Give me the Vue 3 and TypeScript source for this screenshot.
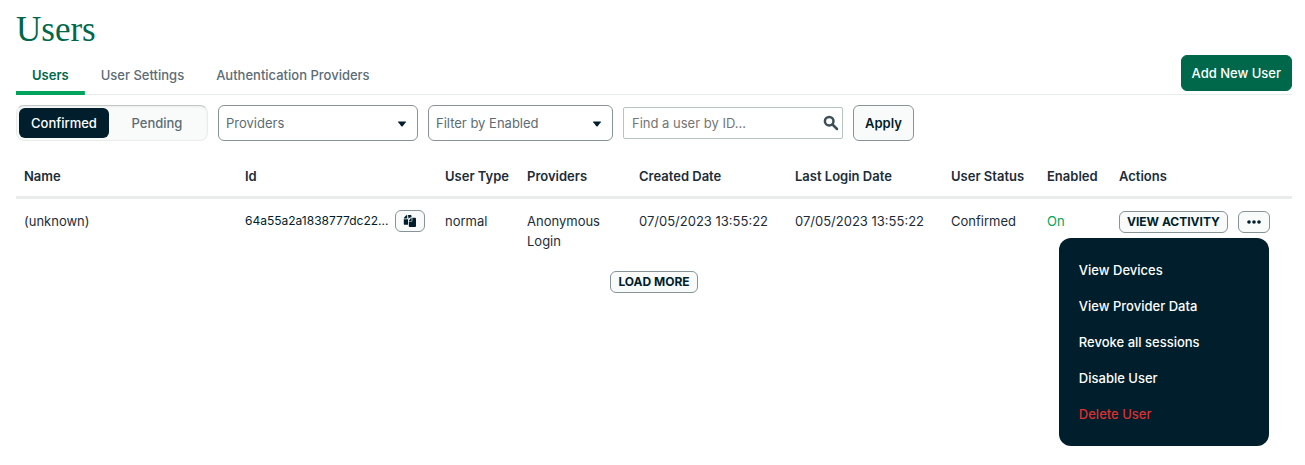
<script setup lang="ts">
import { ref } from 'vue'

interface User {
  name: string
  id: string
  type: string
  provider: string
  created: string
  lastLogin: string
  status: string
  enabled: boolean
}

const tabs = ['Users', 'User Settings', 'Authentication Providers']
const activeTab = ref('Users')

const segments = ['Confirmed', 'Pending']
const segment = ref('Confirmed')

const provider = ref('')
const enabledFilter = ref('')
const search = ref('')
const menuOpen = ref(true)

const columns = [
  { label: 'Name', key: 'name' },
  { label: 'Id', key: 'id' },
  { label: 'User Type', key: 'type' },
  { label: 'Providers', key: 'provider' },
  { label: 'Created Date', key: 'date' },
  { label: 'Last Login Date', key: 'date' },
  { label: 'User Status', key: 'status' },
  { label: 'Enabled', key: 'enabled' },
  { label: 'Actions', key: 'actions' },
]

const users: User[] = [
  {
    name: '(unknown)',
    id: '64a55a2a1838777dc22...',
    type: 'normal',
    provider: 'Anonymous Login',
    created: '07/05/2023 13:55:22',
    lastLogin: '07/05/2023 13:55:22',
    status: 'Confirmed',
    enabled: true,
  },
]

const menuItems = [
  { label: 'View Devices', danger: false },
  { label: 'View Provider Data', danger: false },
  { label: 'Revoke all sessions', danger: false },
  { label: 'Disable User', danger: false },
  { label: 'Delete User', danger: true },
]
</script>

<template>
  <main class="page">
    <h1 class="title">Users</h1>

    <div class="tab-bar">
      <div class="tabs" role="tablist">
        <button
          v-for="tab in tabs"
          :key="tab"
          type="button"
          role="tab"
          class="tab"
          :class="{ active: tab === activeTab }"
          :aria-selected="tab === activeTab"
          @click="activeTab = tab"
        >
          {{ tab }}
        </button>
      </div>
      <button type="button" class="primary">Add New User</button>
    </div>

    <form class="filters" @submit.prevent>
      <div class="segmented" role="group" aria-label="User state">
        <button
          v-for="item in segments"
          :key="item"
          type="button"
          class="segment"
          :class="{ active: item === segment }"
          :aria-pressed="item === segment"
          @click="segment = item"
        >
          {{ item }}
        </button>
      </div>

      <div class="select-box providers">
        <select v-model="provider" aria-label="Providers">
          <option value="">Providers</option>
          <option value="anon">Anonymous Login</option>
        </select>
        <svg class="caret" viewBox="0 0 10 6" aria-hidden="true"><path d="M1.500.5h7q.9 0 .3.8L5.600 5.300q-.6.6-1.200 0L1.200 1.300Q.6.500 1.500.5z" /></svg>
      </div>

      <div class="select-box enabled-filter">
        <select v-model="enabledFilter" aria-label="Filter by Enabled">
          <option value="">Filter by Enabled</option>
          <option value="on">On</option>
          <option value="off">Off</option>
        </select>
        <svg class="caret" viewBox="0 0 10 6" aria-hidden="true"><path d="M1.500.5h7q.9 0 .3.8L5.600 5.300q-.6.6-1.200 0L1.200 1.300Q.6.500 1.500.5z" /></svg>
      </div>

      <div class="search">
        <input v-model="search" type="text" placeholder="Find a user by ID..." aria-label="Find a user by ID" />
        <svg class="search-icon" viewBox="0 0 16 16" aria-hidden="true">
          <circle cx="6.200" cy="6.200" r="4.300" />
          <path d="M9.500 9.500l4.500 4.500" />
        </svg>
      </div>

      <button type="submit" class="apply">Apply</button>
    </form>

    <table class="users">
      <colgroup>
        <col v-for="column in columns" :key="column.label" :class="`col-${column.key}`" />
      </colgroup>
      <thead>
        <tr>
          <th v-for="column in columns" :key="column.label" scope="col">{{ column.label }}</th>
        </tr>
      </thead>
      <tbody>
        <tr v-for="user in users" :key="user.id">
          <td>{{ user.name }}</td>
          <td>
            <div class="id-cell">
              <span class="id-text">{{ user.id }}</span>
              <button type="button" class="small copy" aria-label="Copy id">
                <svg viewBox="0 0 14 14" aria-hidden="true">
                  <path class="solid" d="M4.200 1v3.600H.8q0-.6.4-1L3 1.600Q3.500 1 4.200 1z" />
                  <path class="solid" d="M5 1h2.600q.9 0 .9.900v1.300Q7 3.200 6.200 4L5.500 4.800z" />
                  <path class="solid" d="M.8 5.300h4.400q-.2.400-.2.900v4.600H1.700q-.9 0-.9-.9z" />
                  <path class="solid" d="M9.300 3.800h2.800q.9 0 .9.900v7.400q0 .9-.9.900H6.700q-.9 0-.9-.9V7.600h2.600q.9 0 .9-.9z" />
                  <path class="solid" d="M8.600 4v2.900H5.900q0-.5.4-1l1.300-1.400q.4-.4 1-.5z" />
                </svg>
              </button>
            </div>
          </td>
          <td>{{ user.type }}</td>
          <td>{{ user.provider }}</td>
          <td>{{ user.created }}</td>
          <td>{{ user.lastLogin }}</td>
          <td>{{ user.status }}</td>
          <td class="on">{{ user.enabled ? 'On' : 'Off' }}</td>
          <td>
            <div class="actions">
              <button type="button" class="small">VIEW ACTIVITY</button>
              <div class="menu-anchor">
                <button
                  type="button"
                  class="small more"
                  aria-label="More actions"
                  aria-haspopup="menu"
                  :aria-expanded="menuOpen"
                  @click="menuOpen = !menuOpen"
                >
                  <svg viewBox="0 0 14 4" aria-hidden="true">
                    <circle cx="2" cy="2" r="1.800" />
                    <circle cx="7" cy="2" r="1.800" />
                    <circle cx="12" cy="2" r="1.800" />
                  </svg>
                </button>
                <div v-if="menuOpen" class="menu" role="menu">
                  <button
                    v-for="item in menuItems"
                    :key="item.label"
                    type="button"
                    role="menuitem"
                    class="menu-item"
                    :class="{ danger: item.danger }"
                  >
                    {{ item.label }}
                  </button>
                </div>
              </div>
            </div>
          </td>
        </tr>
      </tbody>
    </table>

    <div class="load">
      <button type="button" class="small">LOAD MORE</button>
    </div>
  </main>
</template>

<style>
body {
  margin: 0;
  background: #fff;
}
</style>

<style scoped>
.page {
  min-height: 100vh;
  padding: 10px 13px 0 16px;
  color: #1c2d38;
  font-family: Inter, "Liberation Sans", sans-serif;
  font-size: 13px;
  line-height: 20px;
}

.page *,
.page {
  box-sizing: border-box;
}

button,
select,
input {
  margin: 0;
  font: inherit;
}

button {
  padding: 0;
  border: 0;
  background: none;
  white-space: nowrap;
  cursor: pointer;
}

.title {
  margin: 0;
  color: #00684a;
  font-family: "Liberation Serif", serif;
  font-size: 35px;
  font-weight: 400;
  line-height: 40px;
}

.tab-bar {
  display: flex;
  align-items: flex-start;
  justify-content: space-between;
  margin-top: 5px;
  border-bottom: 1px solid #e8edeb;
}

.tabs {
  display: flex;
  margin-bottom: -1px;
}

.tab {
  height: 40px;
  padding: 4px 16px 0;
  border-bottom: 4px solid transparent;
  color: #5c6c75;
  font-weight: 500;
}

.tab.active {
  background: linear-gradient(#00a35c, #00a35c) bottom / 100% 4px no-repeat;
  background-origin: border-box;
  border-radius: 4px 4px 0 0;
  color: #00684a;
  font-weight: 600;
}

.primary {
  height: 36px;
  padding: 0 10px;
  border: 1px solid #00684a;
  border-radius: 6px;
  background: #00684a;
  color: #fff;
  font-weight: 500;
}

.filters {
  display: flex;
  align-items: center;
  gap: 10px;
  margin-top: 10px;
}

.segmented {
  display: flex;
  width: 192px;
  height: 36px;
  padding: 2px;
  border: 1px solid #e8edeb;
  border-top-color: #c1c7c6;
  border-radius: 8px;
  background: #f9fbfa;
  box-shadow: inset 0 1px 2px #e8edeb;
}

.segment {
  flex: 1;
  border-radius: 6px;
  color: #5c6c75;
  font-weight: 500;
}

.segment.active {
  flex: none;
  padding: 0 12px;
  background: #001e2b;
  color: #fff;
}

.select-box {
  position: relative;
  height: 36px;
}

.providers {
  width: 200px;
}

.enabled-filter {
  width: 185px;
}

.select-box select {
  width: 100%;
  height: 100%;
  padding: 0 28px 0 7px;
  border: 1px solid #889397;
  border-radius: 6px;
  appearance: none;
  background: #fff;
  color: #5c6c75;
}

.caret {
  position: absolute;
  top: 16px;
  right: 11px;
  width: 10px;
  height: 6px;
  fill: #001e2b;
  pointer-events: none;
}

.search {
  position: relative;
  width: 220px;
}

.search input {
  display: block;
  width: 100%;
  height: 32px;
  padding: 0 28px 0 8px;
  border: 1px solid #b8c4c2;
  border-radius: 2px;
  background: #fff;
  color: #1c2d38;
}

.search input::placeholder {
  color: #757575;
  opacity: 1;
}

.search-icon {
  position: absolute;
  top: 8px;
  right: 4px;
  width: 16px;
  height: 16px;
  fill: none;
  stroke: #3d4f58;
  stroke-width: 2.500;
  stroke-linecap: round;
}

.apply {
  height: 36px;
  padding: 0 11px;
  border: 1px solid #889397;
  border-radius: 6px;
  background: #f9fbfa;
  color: #001e2b;
  font-weight: 600;
}

.users {
  width: 100%;
  margin-top: 15px;
  border-collapse: separate;
  border-spacing: 0;
  table-layout: fixed;
}

.col-id {
  width: 200px;
}

.col-type {
  width: 82px;
}

.col-provider {
  width: 112px;
}

.col-date {
  width: 156px;
}

.col-status {
  width: 96px;
}

.col-enabled {
  width: 72px;
}

.col-actions {
  width: 181px;
}

.users th {
  padding: 10px 8px;
  border-bottom: 3px solid #e8edeb;
  font-weight: 600;
  text-align: left;
  white-space: nowrap;
}

.users td {
  padding: 12px 8px;
  vertical-align: top;
}

.users .on {
  color: #00a35c;
}

.id-cell {
  display: flex;
  align-items: center;
  height: 20px;
}

.id-text {
  min-width: 150px;
  color: #001e2b;
  font-size: 12px;
  white-space: nowrap;
}

.small {
  display: inline-flex;
  align-items: center;
  justify-content: center;
  height: 22px;
  padding: 0 7px;
  border: 1px solid #889397;
  border-radius: 6px;
  background: #f9fbfa;
  color: #001e2b;
  font-size: 12px;
  font-weight: 700;
}

.copy {
  flex: none;
  width: 30px;
  padding: 0;
}

.copy svg {
  width: 14px;
  height: 14px;
}

.solid {
  fill: #001e2b;
}

.actions {
  display: flex;
  gap: 10px;
}

.menu-anchor {
  position: relative;
  display: flex;
}

.more {
  width: 32px;
  padding: 0;
}

.more svg {
  width: 14px;
  height: 4px;
  fill: #001e2b;
}

.menu {
  position: absolute;
  top: 27px;
  right: 1px;
  display: flex;
  flex-direction: column;
  width: 210px;
  padding: 14px 0;
  border-radius: 12px;
  background: #001e2b;
}

.menu-item {
  height: 36px;
  padding: 0 20px;
  color: #fff;
  font-weight: 500;
  text-align: left;
}

.menu-item.danger {
  color: #db3030;
}

.load {
  display: flex;
  justify-content: center;
  margin-top: 8px;
}
</style>
